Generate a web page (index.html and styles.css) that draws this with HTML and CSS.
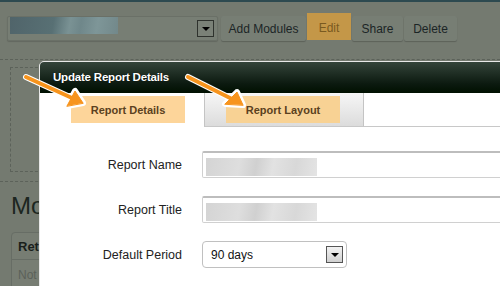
FILE: index.html
```html
<!DOCTYPE html>
<html lang="en">
<head>
    <meta charset="UTF-8">
    <meta name="viewport" content="width=device-width, initial-scale=1.0">
    <title>Update Report Details</title>

    <link rel="stylesheet" href="styles.css">
</head>
<body>
    <div class="page">
        <div class="toolbar">
            <div class="top-select">
                <span class="blur-dark"></span>
                <span class="drop-btn dark"></span>
            </div>
            <div class="btn-group">
                <span class="tool-btn">Add Modules</span>
                <span class="tool-btn edit">Edit</span>
                <span class="tool-btn">Share</span>
                <span class="tool-btn">Delete</span>
            </div>
        </div>

        <div class="dashboard">
            <div class="drop-zone"></div>
        </div>

        <div class="modules">
            <h1>Modules</h1>
            <div class="card">
                <div class="card-head">Retail Sales</div>
                <div class="card-body">Not configured</div>
            </div>
        </div>

        <!-- dialog sits on top of the dashboard -->
        <div class="modal">
            <div class="modal-head">Update Report Details</div>
            <div class="tabs">
                <div class="tab active"><span class="tab-label">Report Details</span></div>
                <div class="tab"><span class="tab-label">Report Layout</span></div>
                <div class="tab-fill"></div>
            </div>
            <form class="report-form">
                <label>Report Name</label>
                <div class="field"><span class="blur-light"></span></div>
                <label>Report Title</label>
                <div class="field"><span class="blur-light"></span></div>
                <label>Default Period</label>
                <div class="period">
                    <span>90 days</span>
                    <span class="drop-btn"></span>
                </div>
            </form>
        </div>

        <svg class="arrows" width="500" height="286" viewBox="0 0 500 286">
            <g stroke="#fff" stroke-width="6" stroke-linecap="round" stroke-linejoin="round" fill="#fff">
                <line x1="26" y1="77" x2="72" y2="98"/>
                <polygon points="83,103 75,91 67,106"/>
                <line x1="188" y1="77" x2="232" y2="99"/>
                <polygon points="243,105 237,92 225,104"/>
            </g>
            <g stroke="#f7941d" stroke-width="4" stroke-linecap="round" stroke-linejoin="round" fill="#f7941d">
                <line x1="26" y1="77" x2="72" y2="98"/>
                <polygon points="83,103 75,91 67,106" stroke-width="1"/>
                <line x1="188" y1="77" x2="232" y2="99"/>
                <polygon points="243,105 237,92 225,104" stroke-width="1"/>
            </g>
        </svg>
    </div>
</body>
</html>
```

FILE: styles.css
```css
body {
    margin: 0;
    font-family: "Liberation Sans", Arial, sans-serif;
    background: #747a70;
}
.page {
    position: relative;
    width: 500px;
    height: 286px;
    overflow: hidden;
    border-top: 2px solid #2d4a50;
    box-sizing: border-box;
}
.toolbar {
    display: flex;
    align-items: flex-start;
    gap: 2px;
    padding: 14px 7px 0;
    height: 25px;
}
.top-select {
    display: flex;
    align-items: center;
    justify-content: space-between;
    width: 211px;
    height: 25px;
    box-sizing: border-box;
    padding: 0 3px 0 2px;
    background: #777e74;
    border: 1px solid #6a7067;
    border-radius: 2px;
    box-shadow: 0 1px 1px rgba(0, 0, 0, 0.15);
}
.blur-dark {
    width: 108px;
    height: 17px;
    margin-top: -6px;
    background: linear-gradient(100deg, #50646a 0%, #587074 40%, #7a9294 55%, #6f878a 65%, #7e9698 80%, #72888a 100%);
}
.drop-btn {
    position: relative;
    width: 15px;
    height: 15px;
    border: 1px solid #555;
    background: linear-gradient(#f2f2f2, #d0d0d0);
}
.drop-btn::after {
    content: "";
    position: absolute;
    left: 4px;
    top: 6px;
    border-left: 4px solid transparent;
    border-right: 4px solid transparent;
    border-top: 4px solid #000;
}
.drop-btn.dark {
    border-color: #2e322d;
    background: #7a8177;
}
.btn-group {
    display: flex;
    align-items: flex-start;
    gap: 1px;
    margin-left: 1px;
}
.tool-btn {
    display: flex;
    align-items: center;
    justify-content: center;
    height: 25px;
    font-size: 12px;
    color: #1b2526;
    background: #777e74;
    border-radius: 2px;
    box-shadow: 0 1px 1px rgba(0, 0, 0, 0.2);
}
.tool-btn:nth-child(1) { width: 85px; }
.tool-btn:nth-child(3) { width: 51px; }
.tool-btn:nth-child(4) { width: 53px; }
.tool-btn.edit {
    width: 44px;
    height: 27px;
    margin-top: -3px;
    padding-top: 3px;
    box-sizing: border-box;
    color: #7a5a20;
    background: #c49748;
    box-shadow: none;
    border-radius: 0;
}
.dashboard {
    margin-top: 18px;
    border-top: 1px dashed #5c625a;
    border-bottom: 1px dashed #5c625a;
    padding: 7px 10px 9px;
}
.drop-zone {
    width: 300px;
    height: 103px;
    border: 1px dashed #5c625a;
}
.modules {
    padding: 0 11px;
}
.modules h1 {
    margin: 10px 0 0;
    font-size: 24px;
    font-weight: normal;
    color: #1c2620;
}
.card {
    margin-top: 12px;
    width: 200px;
    border: 1px solid #676d65;
    border-radius: 4px 4px 0 0;
    background: #777d73;
}
.card-head {
    padding: 6px 6px 5px;
    font-size: 13px;
    font-weight: bold;
    color: #1a1f1b;
    border-bottom: 1px solid #676d65;
}
.card-body {
    padding: 8px 6px;
    font-size: 12px;
    color: #5b6159;
}

/* dialog */
.modal {
    position: absolute;
    left: 39px;
    top: 59px;
    width: 500px;
    height: 260px;
    background: #fff;
    border: 1px solid #e8e8e8;
    border-radius: 5px 5px 0 0;
    overflow: hidden;
}
.modal-head {
    height: 31px;
    padding-left: 13px;
    line-height: 31px;
    font-size: 11.5px;
    font-weight: bold;
    letter-spacing: -0.2px;
    color: #fff;
    background: linear-gradient(#34443a, #0c1a10 70%, #001000);
    text-shadow: 0 0 1px #000;
}
.tabs {
    display: flex;
    height: 34px;
}
.tab {
    width: 164px;
    padding: 3px 0 0 31px;
    box-sizing: border-box;
}
.tab + .tab {
    width: 160px;
    padding-left: 21px;
    background: linear-gradient(#f6f6f6, #dcdcdc);
    border-left: 1px solid #c4c4c4;
    border-right: 1px solid #c4c4c4;
    border-bottom: 1px solid #c8c8c8;
}
.tab-label {
    display: flex;
    align-items: center;
    justify-content: center;
    width: 114px;
    height: 27px;
    font-size: 11px;
    font-weight: bold;
    color: #5b4120;
    background: #fdd59a;
}
.tab + .tab .tab-label { background: #f8d294; }
.tab-fill {
    flex: 1;
    border-bottom: 1px solid #c8c8c8;
}
.report-form {
    display: grid;
    grid-template-columns: 142px 1fr;
    column-gap: 20px;
    row-gap: 18px;
    align-items: center;
    padding-top: 24px;
}
.report-form label {
    text-align: right;
    font-size: 12.5px;
    color: #222;
}
.field {
    height: 27px;
    box-sizing: border-box;
    padding: 5px 0 0 3px;
    border: 1px solid #d0d0d0;
    border-top: 2px solid #bdbdbd;
    border-radius: 2px;
}
.blur-light {
    display: block;
    width: 111px;
    height: 18px;
    background: linear-gradient(100deg, #d4d4d4 0%, #dedede 30%, #d0d0d0 45%, #e2e2e2 60%, #d8d8d8 80%, #e4e4e4 100%);
}
.period {
    display: flex;
    align-items: center;
    justify-content: space-between;
    width: 145px;
    height: 27px;
    box-sizing: border-box;
    padding: 0 3px 0 8px;
    border: 1px solid #c0c0c0;
    border-radius: 4px;
    font-size: 12px;
    color: #111;
}
.arrows {
    position: absolute;
    left: 0;
    top: -2px;
    pointer-events: none;
}
```
